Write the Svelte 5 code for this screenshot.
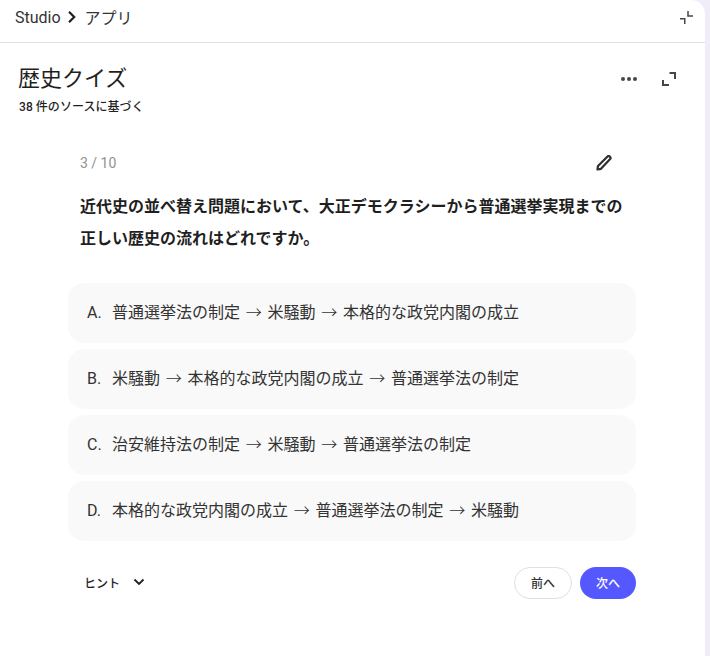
<script>
  const options = [
    ['A.', ['普通選挙法の制定', '米騒動', '本格的な政党内閣の成立']],
    ['B.', ['米騒動', '本格的な政党内閣の成立', '普通選挙法の制定']],
    ['C.', ['治安維持法の制定', '米騒動', '普通選挙法の制定']],
    ['D.', ['本格的な政党内閣の成立', '普通選挙法の制定', '米騒動']]
  ];
</script>

<div class="page">
  <div class="panel">
    <header class="crumbs">
      <span class="crumb">Studio</span>
      <svg class="chev" width="12" height="14" viewBox="0 0 12 14"><path d="M3 1.800 8.200 7 3 12.200" fill="none" stroke="#1f1f1f" stroke-width="2.200"/></svg>
      <span class="crumb jp">アプリ</span>
      <svg class="collapse" width="13" height="13" viewBox="0 0 13 13"><path d="M0 7.750h4.750V13M8 0v5h5" fill="none" stroke="#444746" stroke-width="1.500"/></svg>
    </header>
    <section class="titlebar">
      <div class="titles">
        <h1>歴史クイズ</h1>
        <p>38 件のソースに基づく</p>
      </div>
      <div class="tools">
        <svg width="16" height="4" viewBox="0 0 16 4"><circle cx="2" cy="2" r="2" fill="#444746"/><circle cx="8" cy="2" r="2" fill="#444746"/><circle cx="14" cy="2" r="2" fill="#444746"/></svg>
        <svg width="14" height="14" viewBox="0 0 14 14"><path d="M1 8v5h6M7.500 1H13v6" fill="none" stroke="#444746" stroke-width="2"/></svg>
      </div>
    </section>
    <main class="quiz">
      <div class="counter">
        <span>3 / 10</span>
        <svg width="16" height="17" viewBox="0 0 16 17"><path d="M1.500 14.500 2 11 11.500 1.500a1.600 1.600 0 0 1 2.200 0l.4.400a1.600 1.600 0 0 1 0 2.200L5 13.800z" fill="none" stroke="#2f2f2f" stroke-width="2.200" stroke-linejoin="round"/></svg>
      </div>
      <h2>近代史の並べ替え問題において、大正デモクラシーから普通選挙実現までの<br>正しい歴史の流れはどれですか。</h2>
      <ul>
        {#each options as [k, parts]}
          <li><span class="key">{k}</span><span class="txt">{#each parts as p, i}{#if i > 0}<span class="arr">→</span>{/if}{p}{/each}</span></li>
        {/each}
      </ul>
      <footer>
        <div class="hint">
          <span>ヒント</span>
          <svg width="12" height="8" viewBox="0 0 12 8"><path d="M1.500 1.500 6 6l4.500-4.500" fill="none" stroke="#1f1f1f" stroke-width="1.800"/></svg>
        </div>
        <div class="nav">
          <button class="prev">前へ</button>
          <button class="next">次へ</button>
        </div>
      </footer>
    </main>
  </div>
</div>

<style>
  :global(body) { margin: 0; background: #f0edf8; }
  .page { width: 710px; height: 656px; overflow: hidden; font-family: Roboto, "Noto Sans CJK JP", sans-serif; color: #1f1f1f; }
  .panel { width: 705px; height: 656px; background: #fff; border-top-right-radius: 14px; box-sizing: border-box; }
  .crumbs { border-bottom: 1px solid #e2e0ee; display: flex; align-items: center; padding: 0 12px 8px 15px; height: 34px; gap: 5px; font-size: 16px; color: #333; }
  .crumbs .jp { margin-left: 2px; }
  .collapse { margin-left: auto; }
  .titlebar { display: flex; justify-content: space-between; padding: 22px 29px 0 18px; }
  h1 { margin: 0; font-size: 22px; font-weight: 400; line-height: 28px; }
  .titles p { margin: 6px 0 0 1px; font-size: 12px; font-weight: 500; line-height: 16px; letter-spacing: 0.060px; }
  .tools { display: flex; align-items: center; gap: 25px; height: 28px; }
  .quiz { padding: 0 69px 0 68px; margin-top: 36px; }
  .counter { display: flex; justify-content: space-between; align-items: center; padding: 0 24px 0 12px; height: 24px; font-size: 14px; color: #96908c; }
  h2 { margin: 16px 0 0 12px; font-size: 16px; font-weight: 700; line-height: 32px; }
  ul { list-style: none; margin: 28px 0 0; padding: 0; display: flex; flex-direction: column; gap: 6px; }
  li { height: 60px; background: #f9f9f9; border-radius: 16px; display: flex; align-items: baseline; line-height: 60px; padding: 0 19px; font-size: 16px; color: #333; gap: 8px; overflow: hidden; }
  .key { width: 17px; }
  .arr { font-family: "Noto Sans CJK JP", sans-serif; margin: 0 5.750px; font-weight: 300; line-height: 1; }
  footer { display: flex; justify-content: space-between; align-items: center; margin-top: 26px; }
  .hint { display: flex; align-items: center; gap: 13px; margin: 0 0 2px 16px; font-size: 12px; font-weight: 500; }
  .nav { display: flex; gap: 8px; }
  button { height: 32px; width: 58px; border-radius: 16px; font: 500 12px Roboto, "Noto Sans CJK JP", sans-serif; padding: 0 0 2px; }
  .prev { background: #fff; border: 1px solid #e0deec; color: #333; }
  .next { width: 56px; background: #5558ff; border: 0; color: #fff; }
</style>
